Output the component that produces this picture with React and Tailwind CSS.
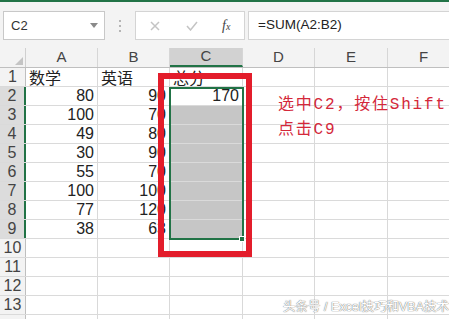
import React from "react";

const cols = [
  { key: "A", w: "w-[72px]" },
  { key: "B", w: "w-[72px]" },
  { key: "C", w: "w-[73px]" },
  { key: "D", w: "w-[72px]" },
  { key: "E", w: "w-[73px]" },
  { key: "F", w: "w-[72px]" }
];

const data = [
  ["数学", "英语", "总分"],
  ["80", "90", "170"],
  ["100", "70", ""],
  ["49", "80", ""],
  ["30", "90", ""],
  ["55", "70", ""],
  ["100", "100", ""],
  ["77", "120", ""],
  ["38", "63", ""]
];

function Cell({ col, row, value }) {
  const inSel = col === 2 && row >= 2 && row <= 9;
  const shaded = col === 2 && row >= 3 && row <= 9;
  const isText = row === 1;
  return (
    <div
      className={`${cols[col].w} h-full shrink-0 border-r border-[#d9d9d9] flex items-end pb-[1px] px-[3px] text-[16px] leading-none text-[#222] ${
        isText ? "justify-start font-['Noto_Sans_CJK_SC',sans-serif] text-[15px]" : "justify-end"
      } ${shaded ? "bg-[#c6c6c6] border-r-[#c6c6c6]" : inSel ? "bg-white" : ""}`}
    >
      {value}
    </div>
  );
}

function Row({ n }) {
  const selected = n >= 2 && n <= 9;
  const vals = data[n - 1] || [];
  return (
    <div className="flex h-[19px] border-b border-[#dadada]">
      <div
        className={`w-[26px] shrink-0 flex items-center justify-center text-[16px] leading-none text-[#444] ${
          selected ? "bg-[#dcdcdc] border-r-2 border-[#217346]" : "bg-[#f3f3f3] border-r border-[#bfbfbf]"
        }`}
      >
        {n <= 13 ? n : ""}
      </div>
      {cols.map((c, i) => (
        <Cell key={c.key} col={i} row={n} value={vals[i] || ""} />
      ))}
    </div>
  );
}

export default function App() {
  return (
    <div className="relative w-[449px] h-[319px] overflow-hidden bg-white font-['Liberation_Sans',sans-serif]">
      <div className="h-[2px] bg-[#217346]" />

      {/* formula bar */}
      <div className="h-[46px] bg-[#f3f3f3] flex items-start pt-[9px]">
        <div className="ml-[3px] w-[102px] h-[29px] bg-white border border-[#c8c8c8] flex items-center justify-between pl-[7px] pr-[6px]">
          <span className="text-[13px] text-[#333]">C2</span>
          <svg width="8" height="5" viewBox="0 0 8 5">
            <path d="M0 0 L8 0 L4 5 Z" fill="#8a8a8a" />
          </svg>
        </div>
        <div className="w-[30px] h-[29px] flex flex-col items-center justify-center gap-[3px]">
          <span className="w-[2px] h-[2px] bg-[#b5b5b5]" />
          <span className="w-[2px] h-[2px] bg-[#b5b5b5]" />
          <span className="w-[2px] h-[2px] bg-[#b5b5b5]" />
        </div>
        <div className="w-[110px] h-[29px] bg-white border border-[#d4d4d4] flex items-center">
          <svg className="ml-[14px]" width="10" height="10" viewBox="0 0 10 10">
            <path d="M1 1 L9 9 M9 1 L1 9" stroke="#c4c4c4" strokeWidth="1.5" />
          </svg>
          <svg className="ml-[26px]" width="12" height="10" viewBox="0 0 12 10">
            <path d="M1 5 L4.5 9 L11 1" stroke="#c4c4c4" strokeWidth="1.5" fill="none" />
          </svg>
          <span className="ml-[24px] text-[14px] italic font-['Liberation_Serif',serif] text-[#444]">
            f<span className="text-[10px]">x</span>
          </span>
        </div>
        <div className="ml-[3px] flex-1 h-[29px] bg-white border-y border-l border-[#d4d4d4] flex items-center pl-[9px] text-[13.5px] text-[#222]">
          =SUM(A2:B2)
        </div>
      </div>

      {/* column headers */}
      <div className="flex h-[20px] bg-[#f3f3f3] border-b border-[#bfbfbf]">
        <div className="w-[26px] shrink-0 border-r border-[#d0d0d0] flex items-end justify-end pr-[2px] pb-[2px]">
          <svg width="8" height="8" viewBox="0 0 8 8">
            <path d="M8 0 L8 8 L0 8 Z" fill="#c4c4c4" />
          </svg>
        </div>
        {cols.map((c, i) => (
          <div
            key={c.key}
            className={`${c.w} shrink-0 flex items-center justify-center text-[15px] text-[#444] border-r border-[#d6d6d6] ${
              i === 2 ? "bg-[#d2d2d2] border-b-2 border-b-[#217346]" : ""
            }`}
          >
            {c.key}
          </div>
        ))}
      </div>

      {/* rows */}
      <div>
        {Array.from({ length: 14 }, (_, i) => (
          <Row key={i} n={i + 1} />
        ))}
      </div>

      {/* selection border C2:C9 */}
      <div className="absolute left-[169px] top-[87px] w-[75px] h-[153px] border-2 border-[#217346]" />
      <div className="absolute left-[239px] top-[236px] w-[6px] h-[6px] bg-[#217346] border border-white" />

      {/* red annotation box */}
      <div className="absolute left-[158px] top-[73px] w-[94px] h-[184px] border-[6px] border-[#e31d2b]" />

      <div className="absolute left-[278px] top-[93px] text-[16px] leading-[25px] tracking-[1.8px] text-[#d4283a] font-['Liberation_Mono','Noto_Sans_CJK_SC',monospace]">
        <div>选中C2，按住Shift</div>
        <div>点击C9</div>
      </div>

      {/* watermark */}
      <div className="absolute left-[283px] top-[300px] text-[12.5px] leading-[14px] text-white font-['Liberation_Sans','Noto_Sans_CJK_SC',sans-serif] [text-shadow:0_0_1px_#777,0_0_1px_#777]">
        头条号 / Excel技巧和VBA技术
      </div>
    </div>
  );
}
